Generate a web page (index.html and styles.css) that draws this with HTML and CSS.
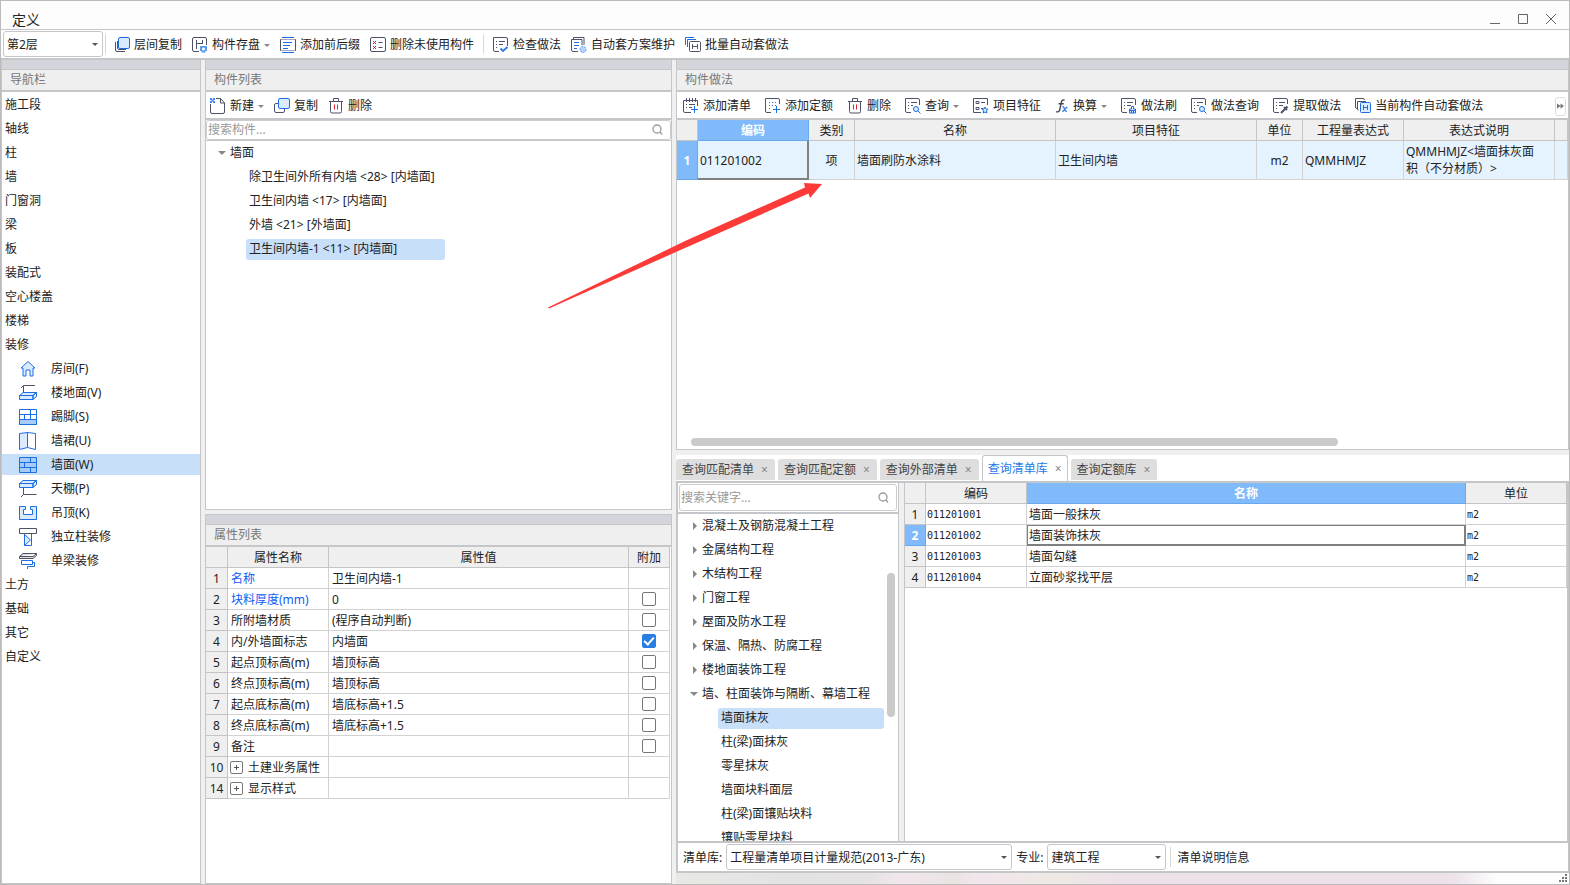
FILE: index.html
```html
<!DOCTYPE html>
<html lang="zh-CN">
<head>
<meta charset="utf-8">
<title>定义</title>
<link rel="stylesheet" href="styles.css">
</head>
<body>
<svg class="sprite" aria-hidden="true">
  <symbol id="i-copy" viewBox="0 0 16 16"><path class="d" d="M1.500 5v8q0 1.500 1.500 1.500h8M3.500 4v7q0 1.500 1.500 1.500h7"/><rect class="bf" x="4.500" y=".5" width="11" height="11" rx="1.500"/></symbol>
  <symbol id="i-copy2" viewBox="0 0 16 16"><rect class="d" x=".5" y="5.500" width="10" height="9" rx="1.500"/><rect class="bf" x="4.500" y=".5" width="11" height="10" rx="1.500"/></symbol>
  <symbol id="i-save" viewBox="0 0 16 16"><path class="d" d="M7 14.500H2Q.5 14.500 .5 13V2Q.5 .5 2 .5h11q1.500 0 1.500 1.500V8M4.500 3v9M4.500 6.500h6M10.500 3v4"/><path class="bfill" d="M8 9h7v5h-1.500v1.500h-4V14H8z"/><circle cx="11.500" cy="12" r="1.500" fill="#fff"/></symbol>
  <symbol id="i-affix" viewBox="0 0 16 16"><path class="d" d="M.5 2.500h15v11H.5z"/><path d="M1 1h14M1 15h14" stroke="#fff" stroke-width="3"/><path class="b" d="M2 .5h12M2 15.500h12M3 5.500h9M3 8.500h7M3 11.500h5"/></symbol>
  <symbol id="i-unused" viewBox="0 0 16 16"><rect class="d" x=".5" y=".5" width="15" height="14" rx="1.500"/><path class="r" d="M3 4l3 3m0-3L3 7M3 9l3 3m0-3l-3 3"/><path class="d" d="M8.500 5.500h4M8.500 10.500h4"/></symbol>
  <symbol id="i-check" viewBox="0 0 16 16"><path class="d" d="M6 14.500H2Q.5 14.500 .5 13V.5H13q1.500 0 1.500 1.500V9M3 4.500h1M6 4.500h6M3 7.500h1M6 7.500h4M3 10.500h1"/><path class="b2" d="M7.500 11.500l2.500 2.500 4.500-4"/></symbol>
  <symbol id="i-scheme" viewBox="0 0 16 16"><path class="d" d="M7 14.500H2Q.5 14.500 .5 13V2.500h10.500V8M2.500 2V.5H13V8"/><path class="b" d="M3 5.500h5M3 8.500h5M3 11.500h3"/><circle cx="12" cy="12.500" r="3" class="gear"/></symbol>
  <symbol id="i-batch" viewBox="0 0 16 16"><path class="b" d="M.5 8V.5H9M2.500 10V2.500H11"/><rect class="d" x="4.500" y="4.500" width="11" height="10" rx="1"/><path class="d" d="M7.500 7v5M12.500 7v5M7.500 9.500h5"/></symbol>
  <symbol id="i-new" viewBox="0 0 16 16"><path class="d" d="M.5 6v8q0 1.500 1.500 1.500h11q1.500 0 1.500-1.500V5L10.500 .5H6M10.500 .5V5h4"/><path d="M0 0h2v2H0zM3 0h2v2H3zM1.500 1.500h2v2h-2zM0 3h2v2H0zM3 3h2v2H3z" fill="#3d86ee"/></symbol>
  <symbol id="i-trash" viewBox="0 0 16 16"><path class="d" d="M1 3.500h14M5.500 3V.5h5V3M2.500 4v9.500q0 1.500 1.500 1.500h8q1.500 0 1.500-1.500V4"/><path class="r" d="M6.500 6.500v5M9.500 6.500v5"/></symbol>
  <symbol id="i-addlist" viewBox="0 0 16 16"><path class="d" d="M8 14.500H2Q.5 14.500 .5 13V2.500h14V8M3.500 0v4M6.500 0v4M9.500 0v4M12.500 0v4M3 6.500h1M6 6.500h6M3 9.500h1M6 9.500h3"/><path class="b" d="M8 11.500h7M11.500 8v7"/></symbol>
  <symbol id="i-addquota" viewBox="0 0 16 16"><path class="d" d="M6 14.500H2Q.5 14.500 .5 13V.5H13q1.500 0 1.500 1.500V6"/><path class="b" d="M4 4.500h1M7 4.500h1M10 4.500h1M4 7.500h1M7 7.500h1M10 7.500h1M4 10.500h1M8 11.500h7M11.500 8v7"/></symbol>
  <symbol id="i-query" viewBox="0 0 16 16"><path class="d" d="M6 14.500H2Q.5 14.500 .5 13V.5H13q1.500 0 1.500 1.500V7M3 4.500h1M6 4.500h6M3 7.500h1M6 7.500h2M3 10.500h1"/><circle class="bf" cx="11" cy="11" r="2.500"/><path class="b" d="M13 13l2.500 2.500"/></symbol>
  <symbol id="i-feature" viewBox="0 0 16 16"><path class="d" d="M8 14.500H.5V.5h14V7M3 3.500h3v2H3zM3 9.500h3v2H3zM8 4.500h4M8 10.500h2"/><path class="bf" d="M12 9l1 2 2 .3-1.500 1.500.4 2.200-1.900-1-1.900 1 .4-2.200L9 11.300l2-.3z"/></symbol>
  <symbol id="i-fx" viewBox="0 0 16 16"><path d="M11 1.500Q8 0 7.200 4L5.500 12Q4.800 15.500 1 14.500M4 5.500h6" fill="none" stroke="#4a4a55" stroke-width="1.600"/><path d="M8.500 9q1.500-.5 2 1.500l1 2.500q.5 1.500 2 .5M14 9l-5.500 5.500" fill="none" stroke="#2f7de8" stroke-width="1.600"/></symbol>
  <symbol id="i-brush" viewBox="0 0 16 16"><path class="d" d="M6 14.500H2Q.5 14.500 .5 13V.5H13q1.500 0 1.500 1.500V7M3 4.500h1M6 4.500h6M3 7.500h1M6 7.500h4M3 10.500h1"/><path class="bf" d="M8.500 15v-4h2V8.500h2V11h2v4zM8.500 12.500h6M10.500 13v2M12.500 13v2"/></symbol>
  <symbol id="i-pick" viewBox="0 0 16 16"><path class="d" d="M6 14.500H2Q.5 14.500 .5 13V.5H13q1.500 0 1.500 1.500V6M3 4.500h1M6 4.500h6M3 7.500h1M6 7.500h4M3 10.500h1"/><path d="M8 15l4-4M11 9l3 3M12.500 10.500l2-2" stroke="#4d5268" stroke-width="2" fill="none"/></symbol>
  <symbol id="i-auto" viewBox="0 0 16 16"><path class="d" d="M2 10.500Q.5 10.500 .5 9V.5H8q1.500 0 1.500 1.500M3.500 12Q2.500 12 2.500 11V3.500H11"/><rect class="bf" x="5.500" y="4.500" width="10" height="10" rx="1"/><path class="b" d="M8.500 7v5M12.500 7v5M8.500 9.500h4"/></symbol>
  <symbol id="i-search" viewBox="0 0 16 16"><circle cx="7" cy="7" r="4" fill="none" stroke="#999" stroke-width="1.300"/><path d="M10 10l2 2.500" stroke="#999" stroke-width="1.300"/></symbol>
  <symbol id="n-room" viewBox="0 0 18 18"><path class="bf" d="M9 1.500l7 6.500h-2v8h-3v-6H7v6H4V8H2z"/></symbol>
  <symbol id="n-floor" viewBox="0 0 18 18"><path class="d" d="M16 1.500H4.500L2 4M4.500 2v8"/><path class="bf" d="M.5 11.500L4 8.500h13.500L14 11.500zM.5 11.500H14v4H.5zM14 11.500l3.500-3v4l-3.500 3z"/></symbol>
  <symbol id="n-skirt" viewBox="0 0 18 18"><path class="w" d="M.5 1.500h17v15H.5z"/><path class="bm" d="M.5 11.500h17v5H.5z"/><path class="b" d="M.5 6.500h17M11.500 1.500v5M5.500 6.500v5M11.500 6.500v5"/></symbol>
  <symbol id="n-dado" viewBox="0 0 18 18"><path class="bf" d="M.5 1.500L8.500 .5v15l-8 2z"/><path class="w" d="M8.500 .5l8 1v16l-8-2z"/></symbol>
  <symbol id="n-wall" viewBox="0 0 18 18"><path class="bm" d="M.5 1.500h17v15H.5zM.5 6.500h17M.5 11.500h17M11.500 1.500v5M5.500 6.500v5M11.500 11.500v5"/></symbol>
  <symbol id="n-canopy" viewBox="0 0 18 18"><path class="bf" d="M.5 3.500L4 .5h13.500L14 3.500zM.5 3.500H14v4H.5zM14 3.500l3.500-3v4L14 7.500z"/><path class="d" d="M4.500 8v6.500h13M4.500 14.500L2 17"/></symbol>
  <symbol id="n-ceiling" viewBox="0 0 18 18"><path class="bf" d="M.5 2.500h6v3h-2v5h9v-5h-2v-3h6v13H.5z"/></symbol>
  <symbol id="n-column" viewBox="0 0 18 18"><path class="d" d="M.5 .5h17v5H.5z"/><path class="b" d="M5.500 6v11.500h7V6"/><path class="bf" d="M5.500 6.500l6 5.500-6 5.500z"/></symbol>
  <symbol id="n-beam" viewBox="0 0 18 18"><path d="M.5 4.500L4 1.500h13.500L14 4.500zM.5 4.500v2H14l3.500-3v-2" fill="#ddd" stroke="#4d5268"/><path class="b" d="M2.500 8.500h11v4h-11zM13.500 10.500h2v4h-7V17"/></symbol>
</svg>

<div class="window">
  <header class="title">
    <h1>定义</h1>
    <div class="winbtns">
      <button aria-label="最小化"><svg viewBox="0 0 12 12"><path d="M1 10.500h10"/></svg></button>
      <button aria-label="最大化"><svg viewBox="0 0 12 12"><path d="M1.500 1.500h9v9h-9z"/></svg></button>
      <button aria-label="关闭"><svg viewBox="0 0 12 12"><path d="M1 1l10 10M11 1L1 11"/></svg></button>
    </div>
  </header>

  <div class="toolbar main">
    <span class="combo floor"><select aria-label="楼层"><option>第2层</option></select></span>
    <i class="sep"></i>
    <button class="tool"><svg><use href="#i-copy"/></svg>层间复制</button>
    <button class="tool drop"><svg><use href="#i-save"/></svg>构件存盘</button>
    <button class="tool"><svg><use href="#i-affix"/></svg>添加前后缀</button>
    <button class="tool"><svg><use href="#i-unused"/></svg>删除未使用构件</button>
    <i class="sep mid"></i>
    <button class="tool"><svg><use href="#i-check"/></svg>检查做法</button>
    <button class="tool"><svg><use href="#i-scheme"/></svg>自动套方案维护</button>
    <button class="tool"><svg><use href="#i-batch"/></svg>批量自动套做法</button>
  </div>

  <main class="body">
    <nav class="panel">
      <h2>导航栏</h2>
      <ul class="nav">
        <li><button>施工段</button></li>
        <li><button>轴线</button></li>
        <li><button>柱</button></li>
        <li><button>墙</button></li>
        <li><button>门窗洞</button></li>
        <li><button>梁</button></li>
        <li><button>板</button></li>
        <li><button>装配式</button></li>
        <li><button>空心楼盖</button></li>
        <li><button>楼梯</button></li>
        <li><button>装修</button></li>
        <li class="sub"><button><svg><use href="#n-room"/></svg>房间(F)</button></li>
        <li class="sub"><button><svg><use href="#n-floor"/></svg>楼地面(V)</button></li>
        <li class="sub"><button><svg><use href="#n-skirt"/></svg>踢脚(S)</button></li>
        <li class="sub"><button><svg><use href="#n-dado"/></svg>墙裙(U)</button></li>
        <li class="sub on"><button><svg><use href="#n-wall"/></svg>墙面(W)</button></li>
        <li class="sub"><button><svg><use href="#n-canopy"/></svg>天棚(P)</button></li>
        <li class="sub"><button><svg><use href="#n-ceiling"/></svg>吊顶(K)</button></li>
        <li class="sub"><button><svg><use href="#n-column"/></svg>独立柱装修</button></li>
        <li class="sub"><button><svg><use href="#n-beam"/></svg>单梁装修</button></li>
        <li><button>土方</button></li>
        <li><button>基础</button></li>
        <li><button>其它</button></li>
        <li><button>自定义</button></li>
      </ul>
    </nav>

    <div class="middle">
      <section class="panel">
        <h2>构件列表</h2>
        <div class="toolbar">
          <button class="tool drop"><svg><use href="#i-new"/></svg>新建</button>
          <button class="tool"><svg><use href="#i-copy2"/></svg>复制</button>
          <button class="tool"><svg><use href="#i-trash"/></svg>删除</button>
        </div>
        <label class="search"><input type="text" placeholder="搜索构件..." aria-label="搜索构件"><svg><use href="#i-search"/></svg></label>
        <ul class="tree components">
          <li class="open"><button>墙面</button></li>
          <li class="leaf"><button>除卫生间外所有内墙 &lt;28&gt; [内墙面]</button></li>
          <li class="leaf"><button>卫生间内墙 &lt;17&gt; [内墙面]</button></li>
          <li class="leaf"><button>外墙 &lt;21&gt; [外墙面]</button></li>
          <li class="leaf on"><button>卫生间内墙-1 &lt;11&gt; [内墙面]</button></li>
        </ul>
      </section>

      <section class="panel lower">
        <h2>属性列表</h2>
        <table class="grid props">
          <colgroup><col class="c-num"><col class="c-prop"><col><col class="c-add"></colgroup>
          <thead><tr><th></th><th>属性名称</th><th>属性值</th><th>附加</th></tr></thead>
          <tbody>
            <tr><th>1</th><td class="key">名称</td><td>卫生间内墙-1</td><td></td></tr>
            <tr><th>2</th><td class="key">块料厚度(mm)</td><td>0</td><td><input type="checkbox" aria-label="附加 块料厚度"></td></tr>
            <tr><th>3</th><td>所附墙材质</td><td>(程序自动判断)</td><td><input type="checkbox" aria-label="附加 所附墙材质"></td></tr>
            <tr><th>4</th><td>内/外墙面标志</td><td>内墙面</td><td><input type="checkbox" checked aria-label="附加 内/外墙面标志"></td></tr>
            <tr><th>5</th><td>起点顶标高(m)</td><td>墙顶标高</td><td><input type="checkbox" aria-label="附加 起点顶标高"></td></tr>
            <tr><th>6</th><td>终点顶标高(m)</td><td>墙顶标高</td><td><input type="checkbox" aria-label="附加 终点顶标高"></td></tr>
            <tr><th>7</th><td>起点底标高(m)</td><td>墙底标高+1.5</td><td><input type="checkbox" aria-label="附加 起点底标高"></td></tr>
            <tr><th>8</th><td>终点底标高(m)</td><td>墙底标高+1.5</td><td><input type="checkbox" aria-label="附加 终点底标高"></td></tr>
            <tr><th>9</th><td>备注</td><td></td><td><input type="checkbox" aria-label="附加 备注"></td></tr>
            <tr><th>10</th><td><button class="group"><i></i>土建业务属性</button></td><td></td><td></td></tr>
            <tr><th>14</th><td><button class="group"><i></i>显示样式</button></td><td></td><td></td></tr>
          </tbody>
        </table>
      </section>
    </div>

    <div class="right">
      <section class="panel">
        <h2>构件做法</h2>
        <div class="toolbar wide">
          <button class="tool"><svg><use href="#i-addlist"/></svg>添加清单</button>
          <button class="tool"><svg><use href="#i-addquota"/></svg>添加定额</button>
          <button class="tool"><svg><use href="#i-trash"/></svg>删除</button>
          <button class="tool drop"><svg><use href="#i-query"/></svg>查询</button>
          <button class="tool"><svg><use href="#i-feature"/></svg>项目特征</button>
          <button class="tool drop fx"><svg><use href="#i-fx"/></svg>换算</button>
          <button class="tool"><svg><use href="#i-brush"/></svg>做法刷</button>
          <button class="tool"><svg><use href="#i-query"/></svg>做法查询</button>
          <button class="tool"><svg><use href="#i-pick"/></svg>提取做法</button>
          <button class="tool"><svg><use href="#i-auto"/></svg>当前构件自动套做法</button>
          <button class="more" aria-label="更多"><svg viewBox="0 0 8 6"><path d="M0 0l4 3-4 3zM4 0l4 3-4 3z" fill="#777"/></svg></button>
        </div>
        <table class="grid method">
          <colgroup><col class="c-row"><col class="c-code"><col class="c-kind"><col class="c-name"><col class="c-name"><col class="c-kind"><col class="c-expr"><col class="c-desc"><col></colgroup>
          <thead><tr><th></th><th class="active">编码</th><th>类别</th><th>名称</th><th>项目特征</th><th>单位</th><th>工程量表达式</th><th>表达式说明</th><th></th></tr></thead>
          <tbody><tr><th class="active">1</th><td class="cursor">011201002</td><td class="mid">项</td><td>墙面刷防水涂料</td><td>卫生间内墙</td><td class="mid">m2</td><td>QMMHMJZ</td><td class="desc">QMMHMJZ&lt;墙面抹灰面积（不分材质）&gt;</td><td></td></tr></tbody>
        </table>
        <div class="hscroll"><i></i></div>
      </section>

      <section class="lookup">
        <div class="tabs" role="tablist">
          <button role="tab">查询匹配清单<span>×</span></button>
          <button role="tab">查询匹配定额<span>×</span></button>
          <button role="tab">查询外部清单<span>×</span></button>
          <button role="tab" class="on" aria-selected="true">查询清单库<span>×</span></button>
          <button role="tab">查询定额库<span>×</span></button>
        </div>
        <div class="split">
          <aside class="catalog">
            <div class="searchwrap"><label class="search"><input type="text" placeholder="搜索关键字..." aria-label="搜索关键字"><svg><use href="#i-search"/></svg></label></div>
            <div class="scroller">
              <ul class="tree chapters">
                <li class="shut"><button>混凝土及钢筋混凝土工程</button></li>
                <li class="shut"><button>金属结构工程</button></li>
                <li class="shut"><button>木结构工程</button></li>
                <li class="shut"><button>门窗工程</button></li>
                <li class="shut"><button>屋面及防水工程</button></li>
                <li class="shut"><button>保温、隔热、防腐工程</button></li>
                <li class="shut"><button>楼地面装饰工程</button></li>
                <li class="open"><button>墙、柱面装饰与隔断、幕墙工程</button></li>
                <li class="leaf on"><button>墙面抹灰</button></li>
                <li class="leaf"><button>柱(梁)面抹灰</button></li>
                <li class="leaf"><button>零星抹灰</button></li>
                <li class="leaf"><button>墙面块料面层</button></li>
                <li class="leaf"><button>柱(梁)面镶贴块料</button></li>
                <li class="leaf"><button>镶贴零星块料</button></li>
              </ul>
              <div class="vscroll"><i></i></div>
            </div>
          </aside>
          <div class="results">
            <table class="grid items">
              <colgroup><col class="c-row"><col class="c-expr"><col><col class="c-expr"></colgroup>
              <thead><tr><th></th><th>编码</th><th class="active">名称</th><th>单位</th></tr></thead>
              <tbody>
                <tr><th>1</th><td class="mono">011201001</td><td>墙面一般抹灰</td><td class="mono">m2</td></tr>
                <tr><th class="active">2</th><td class="mono">011201002</td><td class="cursor">墙面装饰抹灰</td><td class="mono">m2</td></tr>
                <tr><th>3</th><td class="mono">011201003</td><td>墙面勾缝</td><td class="mono">m2</td></tr>
                <tr><th>4</th><td class="mono">011201004</td><td>立面砂浆找平层</td><td class="mono">m2</td></tr>
              </tbody>
            </table>
          </div>
        </div>
        <div class="filters">
          <label for="lib">清单库:</label>
          <span class="combo lib"><select id="lib"><option>工程量清单项目计量规范(2013-广东)</option></select></span>
          <label for="major">专业:</label>
          <span class="combo major"><select id="major"><option>建筑工程</option></select></span>
          <i class="sep"></i>
          <button class="note">清单说明信息</button>
        </div>
        <footer class="status"><svg viewBox="0 0 9 9"><path d="M7 0h2v2H7zM7 3h2v2H7zM4 3h2v2H4zM7 6h2v2H7zM4 6h2v2H4zM1 6h2v2H1z" fill="#777"/></svg></footer>
      </section>
    </div>
  </main>

  <svg class="arrow" viewBox="0 0 276 126" aria-hidden="true"><path d="M1 124.500L138 58 258 4.500 257 0 275 1 263 15 261.500 10.500 138 65 2 125.500z" fill="#fc3b39"/></svg>
</div>
</body>
</html>
```

FILE: styles.css
```css
*, *::before, *::after { box-sizing: border-box; }

body {
  margin: 0;
  color: #222;
  font: 12px/16px "Noto Sans", "Noto Sans CJK SC", sans-serif;
}

button, input, select {
  margin: 0;
  padding: 0;
  border: 0;
  background: none;
  color: inherit;
  font: inherit;
}

h1, h2, ul { margin: 0; padding: 0; font-size: 12px; font-weight: 400; list-style: none; }

.sprite { position: absolute; width: 0; height: 0; }

.d { fill: none; stroke: #4d5268; }
.b { fill: none; stroke: #1b6fe4; }
.b2 { fill: none; stroke: #2f7de8; stroke-width: 2; }
.bf { fill: #dbeafc; stroke: #1b6fe4; }
.bm { fill: #a8ccf7; stroke: #1b6fe4; }
.bfill { fill: #5b9bf0; }
.w { fill: #fff; stroke: #1b6fe4; }
.r { fill: none; stroke: #e0202c; }
.gear { fill: #b8d4fa; stroke: #5b9bf0; stroke-dasharray: 2 1; }

.window {
  position: relative;
  display: flex;
  flex-direction: column;
  height: 100vh;
  overflow: hidden;
  border: 1px solid #bbb;
  background: #fff;
}

.title {
  display: flex;
  flex: none;
  align-items: flex-end;
  justify-content: space-between;
  height: 29px;
  padding: 0 12px 0 11px;
  border-bottom: 1px solid #c4c6ca;
  background: #fdfdfd;
}
.title h1 { font-size: 14px; line-height: 18px; }
.winbtns { display: flex; gap: 16px; padding-bottom: 4px; }
.winbtns button { height: 12px; }
.winbtns svg { display: block; width: 12px; height: 12px; fill: none; stroke: #666; }

.toolbar {
  display: flex;
  flex: none;
  align-items: center;
  gap: 10px;
  height: 28px;
  padding: 2px 4px 0;
  border-bottom: 2px solid #c4c6ca;
}
.toolbar.main { height: 30px; padding: 0 2px; }
.toolbar.wide { gap: 14px; padding: 2px 2px 0 6px; }
.tool { display: flex; flex: none; align-items: center; gap: 4px; white-space: nowrap; }
.main .tool { padding-top: 2px; }
.tool svg { width: 16px; height: 16px; }
.tool.fx svg { width: 14px; }
.drop::after {
  width: 6px;
  border: solid transparent;
  border-width: 3px 3px 0;
  border-top-color: #888;
  content: "";
}
.sep { flex: none; width: 1px; height: 20px; background: #d8d8d8; }
.floor + .sep { margin: 0 -2px 0 -8px; }
.sep.mid { margin: 0 -1px; }
.more {
  display: flex;
  align-items: center;
  justify-content: center;
  width: 11px;
  height: 19px;
  margin-left: auto;
  border: 1px solid #ddd;
  border-radius: 3px;
}
.more svg { width: 7px; height: 6px; }

.combo { position: relative; display: flex; height: 26px; }
.combo select {
  width: 100%;
  padding: 1px 16px 0 3px;
  border: 1px solid #c4c6ca;
  border-radius: 3px;
  appearance: none;
  background: #fff;
}
.combo::after {
  position: absolute;
  top: 12px;
  right: 5px;
  border: solid transparent;
  border-width: 3px 3px 0;
  border-top-color: #555;
  content: "";
}
.floor { width: 100px; }

.body {
  display: grid;
  flex: 1;
  grid-template-columns: 200px 467px minmax(0, 1fr);
  gap: 4px;
  min-height: 0;
  background: #f0f0f0;
}
.middle { display: grid; grid-template-rows: 450fr 370fr; gap: 4px; min-height: 0; }
.right { display: grid; grid-template-rows: 390fr 429fr; gap: 5px; min-height: 0; }

.panel {
  display: flex;
  flex-direction: column;
  min-height: 0;
  overflow: hidden;
  border: 1px solid #c4c6ca;
  border-top: 0;
  background: #fff;
}
.panel.lower { border-top: 1px solid #c4c6ca; }
.panel h2 {
  flex: none;
  height: 32px;
  padding: 3px 8px 0;
  border-top: 9px solid #d3d5db;
  border-bottom: 2px solid #c4c6ca;
  background: #efefef;
  box-shadow: inset 0 1px #c4c6ca;
  color: #777;
}

.nav { padding-top: 1px; }
.nav li { display: flex; height: 24px; padding: 1px 0 2px; }
.nav button { display: flex; flex: 1; align-items: center; padding-left: 3px; }
.nav .sub button { gap: 14px; padding-left: 17px; }
.nav svg { width: 18px; height: 18px; }
.nav .on button { background: #c8dffa; }

.search {
  display: flex;
  flex: none;
  align-items: center;
  height: 20px;
  padding: 0 4px 0 1px;
  border: 1px solid #ccc;
  border-radius: 3px;
}
.search input { flex: 1; min-width: 0; outline: 0; }
.search input::placeholder { color: #999; opacity: 1; }
.search svg { width: 16px; height: 16px; }

.tree li { display: flex; align-items: center; height: 24px; }
.tree button { height: 21px; padding: 0 3px; border-radius: 3px; text-align: left; white-space: pre; }
.tree .on button { background: #c8dffa; }
.open::before {
  margin-right: 1px;
  border: solid transparent;
  border-width: 4px 4px 0;
  border-top-color: #888;
  content: "";
}
.shut::before {
  margin: 0 2px 0 3px;
  border: solid transparent;
  border-width: 4px 0 4px 4px;
  border-left-color: #888;
  content: "";
}
.components { border-top: 1px solid #c4c6ca; }
.components li { padding-left: 12px; }
.components .leaf { padding-left: 40px; }
.components .on button { width: 199px; }

.grid { width: 100%; border-spacing: 0; table-layout: fixed; }
.grid th, .grid td {
  height: 21px;
  padding: 0 2px;
  overflow: hidden;
  border: solid #d2d2d2;
  border-width: 0 1px 1px 0;
  font-weight: 400;
  line-height: 17px;
}
.grid th { padding: 0; border-color: #c4c4c4; background: #efefef; text-align: center; }
.grid th.active { border-color: #68a8ef; background: #80bafa; color: #fff; font-weight: 700; }
.grid .mid { text-align: center; }
.c-num { width: 22px; }
.c-prop { width: 101px; }
.c-add { width: 41px; }
.c-row { width: 21px; }
.c-code { width: 111px; }
.c-kind { width: 46px; }
.c-name { width: 201px; }
.c-expr { width: 101px; }
.c-desc { width: 151px; }

.props { width: calc(100% - 1px); }
.props td { padding: 0 3px; }
.props td:last-child { text-align: center; }
.props .key { color: #0f5cf5; }
.props input {
  display: block;
  width: 14px;
  height: 14px;
  margin: 0 auto;
  border: 1px solid #777;
  border-radius: 2px;
  appearance: none;
}
.props input:checked { border-color: #2a7de1; background: #2a7de1; }
.props input:checked::after {
  display: block;
  width: 6px;
  height: 10px;
  margin: 0 auto;
  border: solid #fff;
  border-width: 0 2px 2px 0;
  transform: rotate(42deg);
  content: "";
}
.group { display: flex; align-items: center; gap: 5px; white-space: nowrap; }
.props td:has(.group) { padding: 0 2px; }
.group i {
  width: 13px;
  height: 13px;
  border: 1px solid #777;
  border-radius: 2px;
  background:
    linear-gradient(#555, #555) center / 5px 1px no-repeat,
    linear-gradient(#555, #555) center / 1px 5px no-repeat;
}

.method tbody td { height: 39px; background: #e5f3ff; }
.method .cursor { box-shadow: inset -1px -1px #808080; border-color: #808080; }
.method .desc { padding-right: 12px; }
.hscroll { margin-top: auto; padding: 0 14px 3px; }
.hscroll i { display: block; width: 75%; height: 8px; border-radius: 4px; background: #cacaca; }

.lookup { display: flex; flex-direction: column; min-width: 0; min-height: 0; background: #fff; }
.tabs {
  display: flex;
  flex: none;
  align-items: flex-end;
  gap: 3px;
  height: 28px;
  border-bottom: 2px solid #c4c6ca;
}
.tabs button {
  display: flex;
  gap: 7px;
  align-items: center;
  height: 21px;
  margin-bottom: 1px;
  padding: 0 7px 0 6px;
  border-radius: 3px 3px 0 0;
  background: #dedede;
  color: #444;
  white-space: nowrap;
}
.tabs span { color: #888; }
.tabs .on {
  height: 26px;
  margin-bottom: 0;
  padding: 0 5px;
  border: 1px solid #c4c6ca;
  border-bottom: 0;
  background: #fff;
  color: #1f7ae8;
}

.split {
  display: grid;
  flex: 1;
  grid-template-columns: 223px minmax(0, 1fr);
  gap: 5px;
  min-height: 0;
  background: #f0f0f0;
}
.catalog {
  display: flex;
  flex-direction: column;
  min-height: 0;
  border: solid #c4c6ca;
  border-width: 0 1px 0 2px;
  background: #fff;
}
.searchwrap { padding: 1px; border-bottom: 2px solid #c4c6ca; }
.searchwrap .search { height: 27px; }
.scroller { display: flex; flex: 1; min-height: 0; overflow: hidden; }
.chapters { flex: 1; }
.chapters li { padding-left: 12px; }
.chapters .leaf { padding-left: 40px; }
.chapters .on button { flex: 1; }
.vscroll { width: 14px; padding: 59px 3px 0; }
.vscroll i { display: block; height: 144px; border-radius: 4px; background: #cacaca; }

.results { border: solid #c4c6ca; border-width: 0 2px 0 1px; background: #fff; }
.items .mono { padding: 0 1px; font: 10px/17px "DejaVu Sans Mono", monospace; }
.items .cursor { border-color: #808080; box-shadow: inset 1px 1px #808080, inset -1px -1px #808080; }

.filters {
  display: flex;
  flex: none;
  align-items: center;
  gap: 4px;
  height: 32px;
  padding: 0 5px;
  border: 2px solid #c4c6ca;
  border-right-width: 1px;
  white-space: nowrap;
}
.filters label, .note { padding-top: 2px; }
.lib { width: 286px; }
.major { width: 119px; }
.filters .sep { margin-right: 2px; }
.status {
  display: flex;
  flex: none;
  justify-content: flex-end;
  height: 11px;
  padding: 1px 2px;
  background: linear-gradient(90deg, #e8e8e4, #e3e3e3 12%, #e6e3e2 22%, #f2e6ee 25%, #e9e4e1 31%, #f2e6ee 34%, #efe9e3 42%, #ede1ea 50%, #ede1ea 87%, #fdfdfd 92%);
}
.status svg { width: 9px; height: 9px; }

.arrow {
  position: absolute;
  top: 182px;
  left: 546px;
  width: 276px;
  height: 126px;
  pointer-events: none;
}
```
